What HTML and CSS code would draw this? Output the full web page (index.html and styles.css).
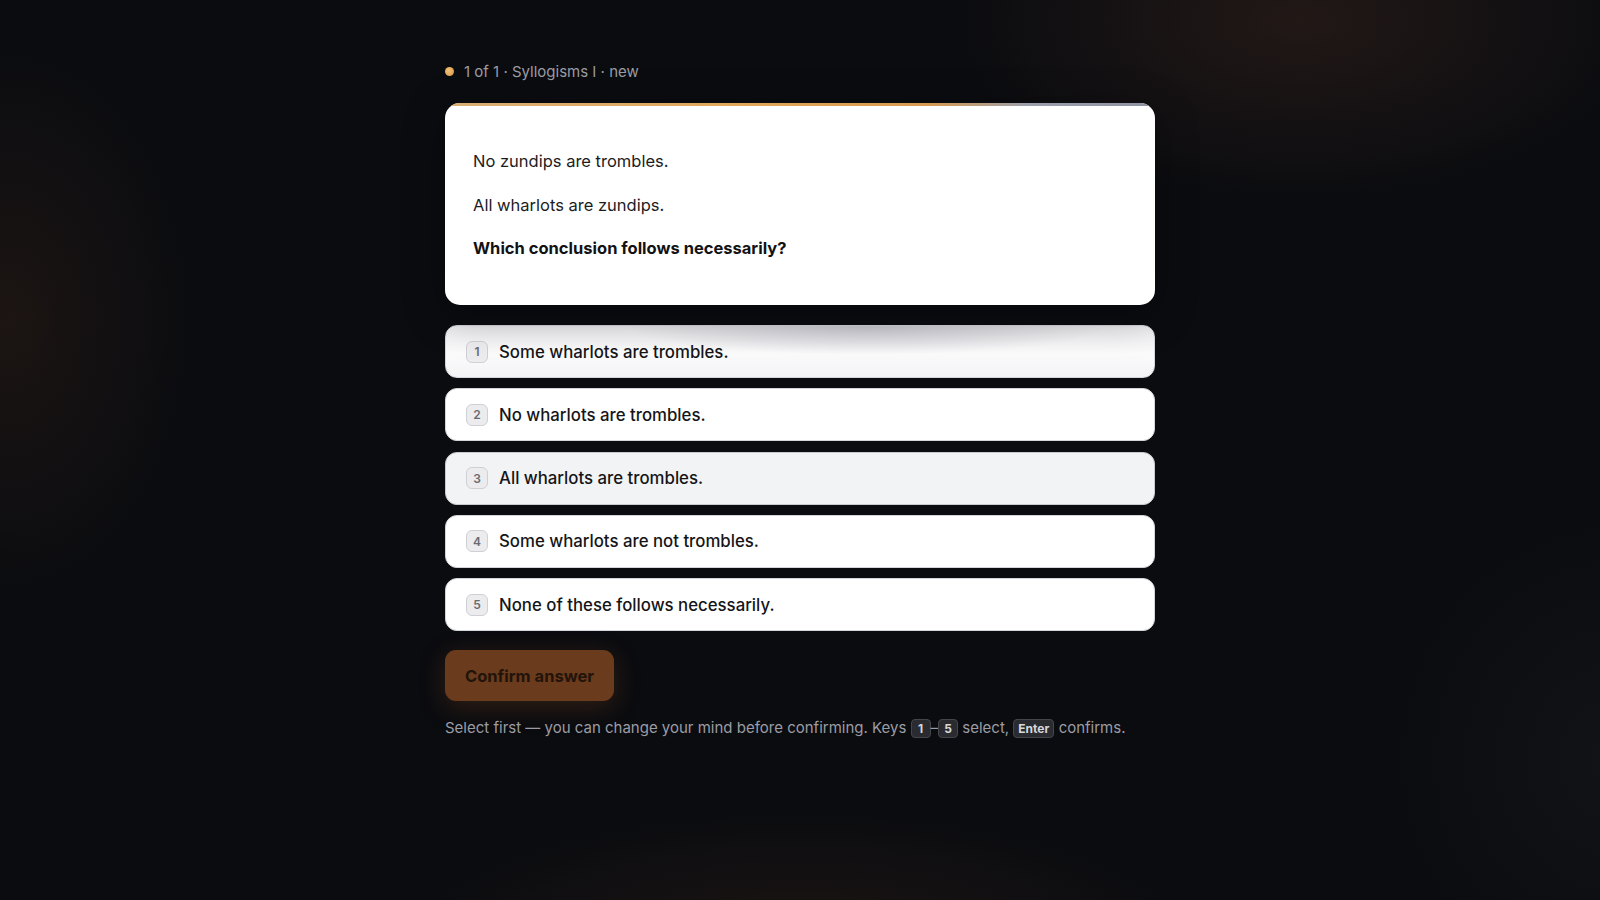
FILE: index.html
```html
<!DOCTYPE html>
<html lang="en">
<head>
<meta charset="utf-8">
<title>Syllogisms I</title>
<link rel="stylesheet" href="styles.css">
</head>
<body>
<main class="page">
  <div class="meta"><span class="dot"></span><span>1 of 1 · Syllogisms I · new</span></div>
  <section class="card">
    <p>No zundips are trombles.</p>
    <p>All wharlots are zundips.</p>
    <p class="q">Which conclusion follows necessarily?</p>
  </section>
  <div class="options">
    <div class="opt opt-focus"><span class="num">1</span><span class="label">Some wharlots are trombles.</span></div>
    <div class="opt"><span class="num">2</span><span class="label">No wharlots are trombles.</span></div>
    <div class="opt opt-hover"><span class="num">3</span><span class="label">All wharlots are trombles.</span></div>
    <div class="opt"><span class="num">4</span><span class="label">Some wharlots are not trombles.</span></div>
    <div class="opt"><span class="num">5</span><span class="label">None of these follows necessarily.</span></div>
  </div>
  <button class="confirm" type="button">Confirm answer</button>
  <p class="hint">Select first — you can change your mind before confirming. Keys <kbd>1</kbd>–<kbd>5</kbd> select, <kbd>Enter</kbd> confirms.</p>
</main>
</body>
</html>
```
FILE: styles.css
```css
html, body {
  margin: 0;
  height: 100%;
}
body {
  font-family: Inter, "Noto Sans", "Liberation Sans", sans-serif;
  background-color: #0b0c10;
  background-image:
    radial-gradient(ellipse 440px 230px at 1300px 20px, rgba(56, 36, 28, 0.5), transparent 78%),
    radial-gradient(ellipse 240px 360px at 10px 320px, rgba(48, 31, 22, 0.45), transparent 75%),
    radial-gradient(ellipse 520px 170px at 800px 940px, rgba(48, 31, 22, 0.45), transparent 75%),
    radial-gradient(ellipse 300px 320px at 1620px 760px, rgba(30, 30, 34, 0.4), transparent 75%);
  color: #111;
}
.page {
  width: 710px;
  margin: 0 auto;
  padding-top: 61px;
}
.meta {
  display: flex;
  align-items: center;
  gap: 10px;
  height: 20px;
  font-size: 15px;
  color: #9c9ca4;
  margin-bottom: 22px;
}
.dot {
  width: 9px;
  height: 9px;
  border-radius: 50%;
  background: radial-gradient(circle at 40% 40%, #f3c37a, #d9943e);
}
.card {
  position: relative;
  background: #fff;
  border-radius: 15px;
  padding: 45px 28px 44px;
  display: flex;
  flex-direction: column;
  gap: 17.5px;
  overflow: hidden;
  box-shadow: 0 10px 40px rgba(0, 0, 0, 0.35);
}
.card::before {
  content: "";
  position: absolute;
  left: 0;
  right: 0;
  top: 0;
  height: 3px;
  background: linear-gradient(90deg, #d7ae74 0%, #e2a75a 40%, #d79a50 68%, #9c9fab 82%, #8e93a0 100%);
}
.card p {
  margin: 0;
  font-size: 16.5px;
  line-height: 26px;
  color: #1c1c1f;
}
.card p.q {
  font-weight: 700;
  color: #121214;
}
.options {
  margin-top: 20px;
  display: flex;
  flex-direction: column;
  gap: 10.3px;
}
.opt {
  display: flex;
  align-items: center;
  gap: 11px;
  height: 53px;
  box-sizing: border-box;
  padding: 0 20px;
  background: #fff;
  border: 1px solid #d4d5da;
  border-radius: 12px;
}
.opt-focus {
  background:
    radial-gradient(ellipse 300px 36px at 420px 0px, rgba(185, 185, 194, 0.7), transparent 80%),
    linear-gradient(180deg, #ececef 0%, #fbfbfc 55%, #f3f3f5 100%);
}
.opt-hover {
  background: #f2f3f5;
  border-color: #c9cace;
}
.num {
  width: 22px;
  height: 22px;
  box-sizing: border-box;
  display: flex;
  align-items: center;
  justify-content: center;
  border: 1px solid #cfd0d5;
  border-radius: 6px;
  background: #ececef;
  font-size: 12px;
  font-weight: 600;
  color: #6a6b72;
}
.label {
  font-size: 16.8px;
  font-weight: 500;
  color: #151518;
}
.confirm {
  margin-top: 19px;
  display: block;
  width: 169px;
  height: 51px;
  border: none;
  border-radius: 11px;
  background: #6a3b1d;
  color: #22140a;
  font-family: inherit;
  font-size: 16.5px;
  font-weight: 700;
  box-shadow: 0 6px 24px rgba(120, 66, 30, 0.35);
  cursor: default;
}
.hint {
  margin: 16px 0 0;
  font-size: 15px;
  line-height: 22px;
  color: #9c9ca4;
}
kbd {
  display: inline-block;
  font-family: inherit;
  font-size: 12px;
  font-weight: 700;
  line-height: 17px;
  padding: 0 4px;
  min-width: 10px;
  text-align: center;
  border: 1px solid #45464c;
  border-radius: 4px;
  background: #2a2b30;
  color: #d8d8dc;
}
```
